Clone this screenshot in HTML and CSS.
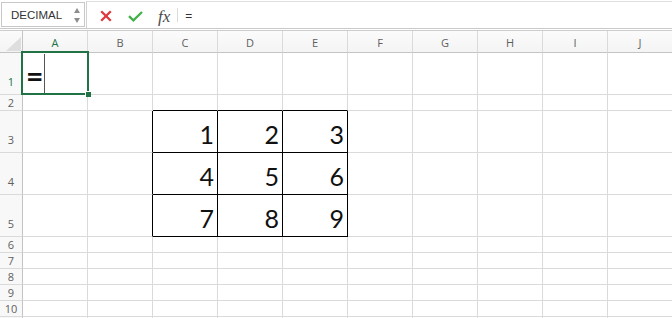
FILE: index.html
```html
<!DOCTYPE html>
<html>
<head>
<meta charset="utf-8">
<link rel="stylesheet" href="styles.css">
</head>
<body>
<div class="app">
  <div class="toolbar">
    <div class="namebox">
      <span class="name">DECIMAL</span>
      <span class="spin"><span class="up"></span><span class="down"></span></span>
    </div>
    <div class="fbar">
      <span class="btn cancel"><svg width="12" height="12" viewBox="0 0 12 12"><path d="M1.2 1.2L10.8 10.8M10.8 1.2L1.2 10.8" stroke="#e0393b" stroke-width="2.3" fill="none"/></svg></span>
      <span class="btn enter"><svg width="15" height="11" viewBox="0 0 15 11"><path d="M1 5.2L5.4 9.4L14 1" fill="none" stroke="#44b04a" stroke-width="2.3"/></svg></span>
      <span class="fx">fx</span>
      <span class="sep"></span>
      <span class="formula">=</span>
    </div>
  </div>

  <div class="sheet">
    <div class="ch corner"><svg width="15" height="14" viewBox="0 0 15 14"><polygon points="15,0 15,14 0,14" fill="#dedede"/></svg></div>
    <div class="ch active">A</div><div class="ch">B</div><div class="ch">C</div><div class="ch">D</div><div class="ch">E</div><div class="ch">F</div><div class="ch">G</div><div class="ch">H</div><div class="ch">I</div><div class="ch">J</div>

    <div class="rh tall active">1</div>
    <div class="c edit"><span class="eq">=</span><span class="caret"></span><div class="sel"><span class="handle"></span></div></div>
    <div class="c"></div><div class="c"></div><div class="c"></div><div class="c"></div><div class="c"></div><div class="c"></div><div class="c"></div><div class="c"></div><div class="c"></div>

    <div class="rh">2</div>
    <div class="c"></div><div class="c"></div><div class="c bt"></div><div class="c bt"></div><div class="c bt"></div><div class="c"></div><div class="c"></div><div class="c"></div><div class="c"></div><div class="c"></div>

    <div class="rh tall">3</div>
    <div class="c"></div><div class="c bl"></div><div class="c t n">1</div><div class="c t n">2</div><div class="c t n">3</div><div class="c"></div><div class="c"></div><div class="c"></div><div class="c"></div><div class="c"></div>

    <div class="rh tall">4</div>
    <div class="c"></div><div class="c bl"></div><div class="c t n">4</div><div class="c t n">5</div><div class="c t n">6</div><div class="c"></div><div class="c"></div><div class="c"></div><div class="c"></div><div class="c"></div>

    <div class="rh tall">5</div>
    <div class="c"></div><div class="c bl"></div><div class="c t n">7</div><div class="c t n">8</div><div class="c t n">9</div><div class="c"></div><div class="c"></div><div class="c"></div><div class="c"></div><div class="c"></div>

    <div class="rh">6</div>
    <div class="c"></div><div class="c"></div><div class="c"></div><div class="c"></div><div class="c"></div><div class="c"></div><div class="c"></div><div class="c"></div><div class="c"></div><div class="c"></div>
    <div class="rh">7</div>
    <div class="c"></div><div class="c"></div><div class="c"></div><div class="c"></div><div class="c"></div><div class="c"></div><div class="c"></div><div class="c"></div><div class="c"></div><div class="c"></div>
    <div class="rh">8</div>
    <div class="c"></div><div class="c"></div><div class="c"></div><div class="c"></div><div class="c"></div><div class="c"></div><div class="c"></div><div class="c"></div><div class="c"></div><div class="c"></div>
    <div class="rh">9</div>
    <div class="c"></div><div class="c"></div><div class="c"></div><div class="c"></div><div class="c"></div><div class="c"></div><div class="c"></div><div class="c"></div><div class="c"></div><div class="c"></div>
    <div class="rh">10</div>
    <div class="c"></div><div class="c"></div><div class="c"></div><div class="c"></div><div class="c"></div><div class="c"></div><div class="c"></div><div class="c"></div><div class="c"></div><div class="c"></div>
    <div class="rh"></div>
    <div class="c"></div><div class="c"></div><div class="c"></div><div class="c"></div><div class="c"></div><div class="c"></div><div class="c"></div><div class="c"></div><div class="c"></div><div class="c"></div>
  </div>
</div>
</body>
</html>
```

FILE: styles.css
```css
html, body {
  margin: 0;
  padding: 0;
  background: #ffffff;
}
body {
  width: 672px;
  height: 318px;
  overflow: hidden;
  font-family: "Open Sans", "Liberation Sans", sans-serif;
}
.app {
  width: 672px;
}

/* ---------- toolbar ---------- */
.toolbar {
  box-sizing: border-box;
  height: 29px;
  margin-bottom: 1px;
  display: flex;
  border-bottom: 1px solid #c9c9c9;
  background: #ffffff;
}
.namebox {
  box-sizing: border-box;
  width: 84px;
  height: 25px;
  margin: 2px 0 0 1px;
  border: 1px solid #c8c8c8;
  display: flex;
  align-items: center;
  justify-content: space-between;
  padding: 1px 4px 0 9px;
}
.name {
  font-family: "Liberation Sans", Arial, sans-serif;
  font-size: 11.5px;
  color: #333333;
}
.spin {
  display: flex;
  flex-direction: column;
  gap: 5px;
}
.up, .down {
  width: 0;
  height: 0;
  border-left: 3.5px solid transparent;
  border-right: 3.5px solid transparent;
}
.up { border-bottom: 5px solid #8d8d8d; }
.down { border-top: 5px solid #8d8d8d; }

.fbar {
  flex: 1;
  box-sizing: border-box;
  margin: 1px 0 0 1px;
  border-left: 1px solid #d2d2d2;
  border-top: 1px solid #dedede;
  display: flex;
  align-items: center;
  padding: 2px 0 0 13px;
}
.btn {
  display: flex;
}
.cancel { margin-right: 16px; }
.enter { margin-right: 15px; margin-top: 1px; }
.fx {
  font-family: "Liberation Serif", "Times New Roman", serif;
  font-style: italic;
  font-size: 17px;
  color: #4a4a4a;
  line-height: 1;
  margin-right: 7px;
}
.sep {
  width: 1px;
  height: 14px;
  background: #dadada;
  margin-right: 7px;
  margin-top: -2px;
}
.formula {
  font-family: "Liberation Sans", Arial, sans-serif;
  font-size: 12px;
  color: #333333;
  margin-top: -1px;
}

/* ---------- sheet ---------- */
.sheet {
  display: grid;
  grid-template-columns: 23px repeat(10, 65px);
  grid-template-rows: 22px 42px 16px 42px 42px 42px repeat(6, 16px);
  border-top: 1px solid #cdcdcd;
}
.ch, .rh, .c {
  box-sizing: border-box;
  border-right: 1px solid #dadada;
  border-bottom: 1px solid #dadada;
}
.ch {
  background: linear-gradient(#fbfbfb, #f4f4f4);
  border-bottom-color: #c4c4c4;
  display: flex;
  align-items: center;
  justify-content: center;
  font-size: 11px;
  color: #5f5f5f;
  padding-top: 1px;
}
.corner {
  justify-content: flex-end;
  align-items: flex-end;
  padding: 0 1px 1px 0;
  border-right-color: #c4c4c4;
}
.corner svg { display: block; }
.rh {
  background: #f8f8f8;
  border-right-color: #c4c4c4;
  display: flex;
  align-items: flex-end;
  justify-content: center;
  font-size: 11px;
  line-height: 1;
  color: #5f5f5f;
  padding-bottom: 2px;
}
.rh.tall { padding-bottom: 7px; }
.active { color: #217346; }

.c.bl { border-right-color: #000000; }
.c.bt { border-bottom-color: #000000; }
.c.t {
  border-right-color: #000000;
  border-bottom-color: #000000;
}
.n {
  display: flex;
  justify-content: flex-end;
  align-items: flex-end;
  padding: 0 3px 5px 0;
  font-family: Lato, "Open Sans", sans-serif;
  font-size: 25px;
  line-height: 1;
  color: #111111;
}

.edit {
  position: relative;
  display: flex;
  align-items: flex-end;
  padding-left: 3px;
}
.eq {
  font-family: Lato, "Open Sans", sans-serif;
  font-weight: 700;
  font-size: 30px;
  line-height: 1;
  color: #111111;
  margin-bottom: 4px;
}
.caret {
  align-self: stretch;
  width: 1px;
  background: #555555;
  margin: 1px 0 0 1px;
}
.sel {
  position: absolute;
  left: -2px;
  top: -2px;
  width: 68px;
  height: 44px;
  box-sizing: border-box;
  border: 2px solid #217346;
  pointer-events: none;
}
.handle {
  position: absolute;
  right: -4px;
  bottom: -4px;
  width: 6px;
  height: 6px;
  box-sizing: border-box;
  background: #217346;
  border-left: 1px solid #ffffff;
  border-top: 1px solid #ffffff;
}
```
